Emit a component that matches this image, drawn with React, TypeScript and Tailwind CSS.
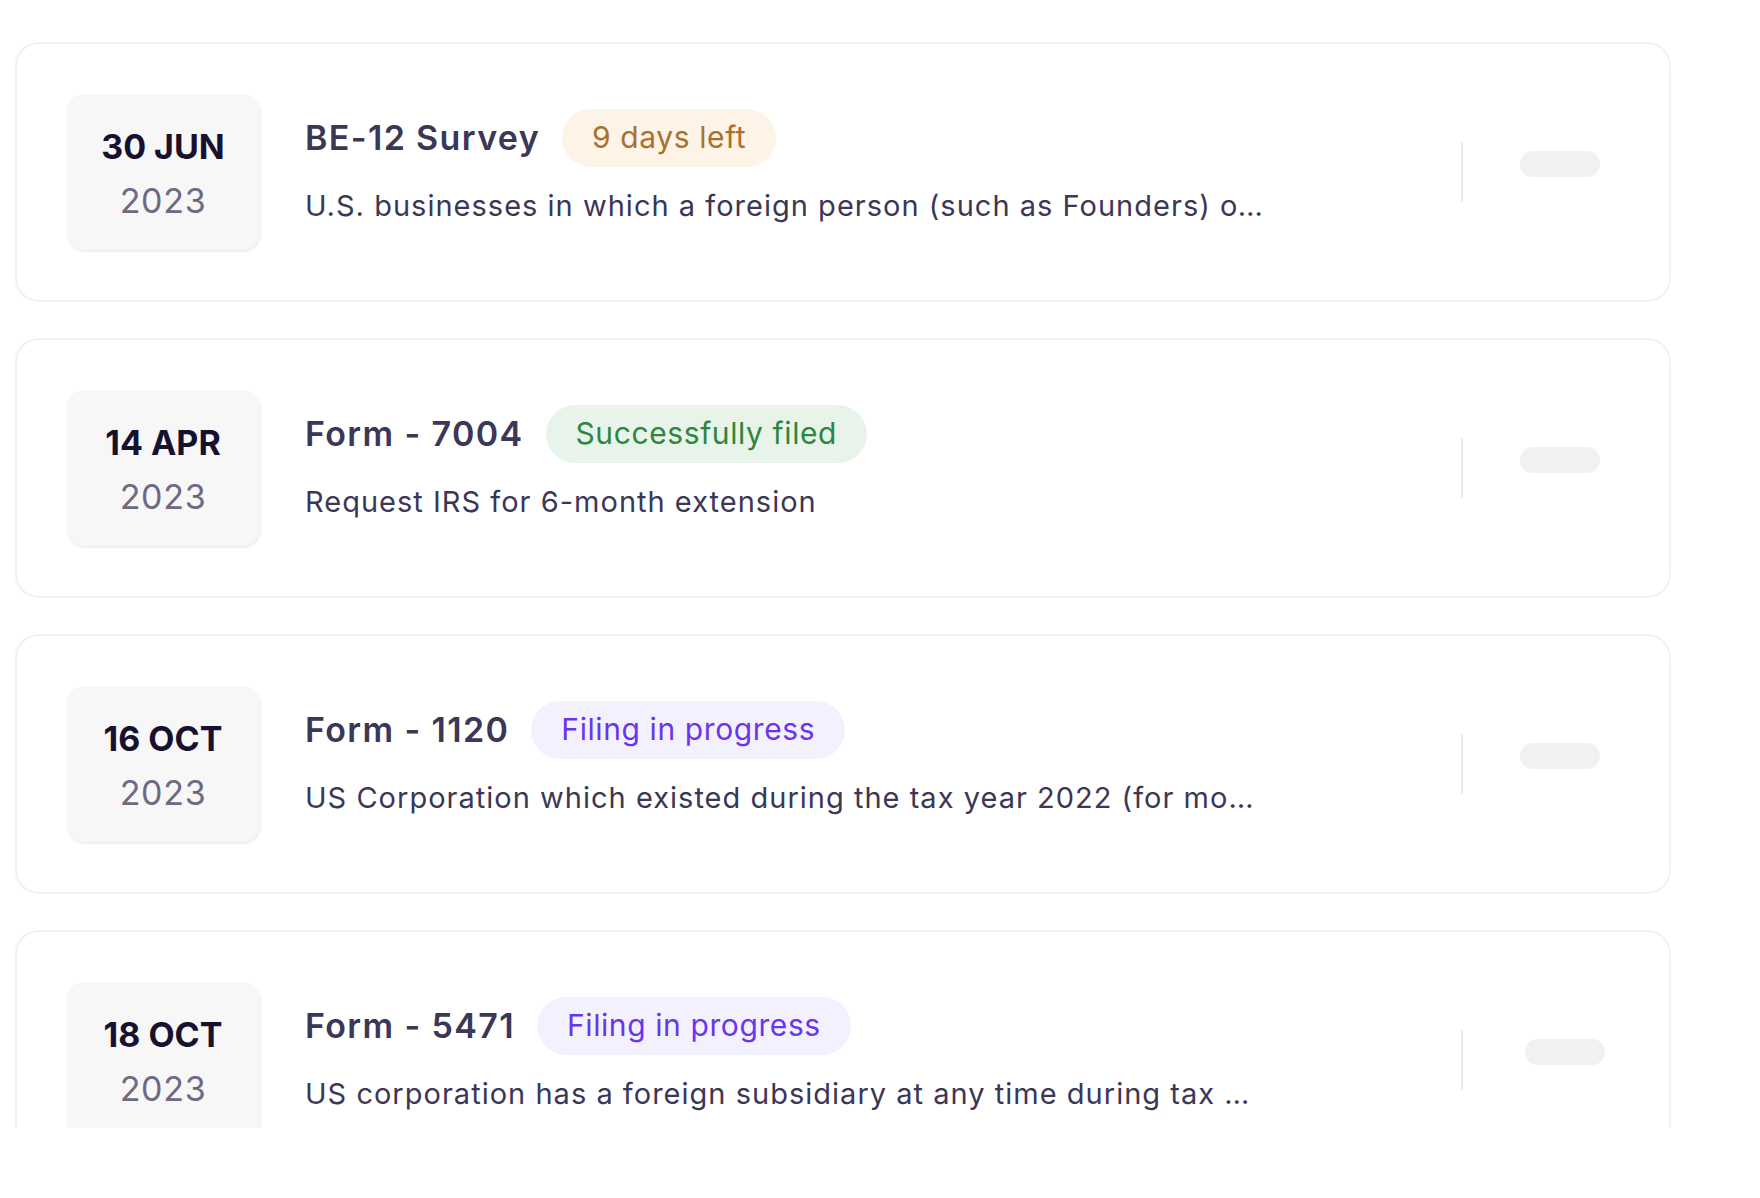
type Tone = 'orange' | 'green' | 'purple';

type Filing = {
  day: string;
  year: string;
  title: string;
  status: string;
  tone: Tone;
  description: string;
  pillShift?: boolean;
};

const filings: Filing[] = [
  {
    day: '30 JUN',
    year: '2023',
    title: 'BE-12 Survey',
    status: '9 days left',
    tone: 'orange',
    description:
      'U.S. businesses in which a foreign person (such as Founders) own 10% or more of the voting securities',
  },
  {
    day: '14 APR',
    year: '2023',
    title: 'Form - 7004',
    status: 'Successfully filed',
    tone: 'green',
    description: 'Request IRS for 6-month extension',
  },
  {
    day: '16 OCT',
    year: '2023',
    title: 'Form - 1120',
    status: 'Filing in progress',
    tone: 'purple',
    description:
      'US Corporation which existed during the tax year 2022 (for most of the companies this is a must)',
  },
  {
    day: '18 OCT',
    year: '2023',
    title: 'Form - 5471',
    status: 'Filing in progress',
    tone: 'purple',
    description:
      'US corporation has a foreign subsidiary at any time during tax year 2022 and owns more than 50%',
    pillShift: true,
  },
];

const toneClass: Record<Tone, string> = {
  orange: 'bg-[#fdf3e6] text-[#a8712f]',
  green: 'bg-[#e8f4ea] text-[#2e8540]',
  purple: 'bg-[#f4f1fe] text-[#6a35ee]',
};

function FilingCard({ item }: { item: Filing }) {
  return (
    <div className="flex h-[260px] shrink-0 items-center rounded-[24px] border-2 border-[#f1f1f3] bg-white pl-[49px] pr-[69px]">
      <div className="flex h-[156px] w-[194px] shrink-0 flex-col items-center justify-center rounded-[18px] bg-[#f7f7f8] pt-1 shadow-[1px_2px_2px_rgba(0,0,0,0.07)]">
        <span className="text-[34px] leading-[54px] font-bold text-[#16112e]">{item.day}</span>
        <span className="text-[34px] leading-[54px] tracking-[0.02em] text-[#6e6a82]">{item.year}</span>
      </div>

      <div className="-mt-[10px] ml-[45px] flex w-[958px] min-w-0 flex-col">
        <div className="flex items-center gap-[22px]">
          <h3 className="text-[34px] leading-[44px] font-semibold tracking-[0.04em] text-[#3b3756]">
            {item.title}
          </h3>
          <span
            className={`flex h-[58px] items-center rounded-full px-[30px] text-[30px] tracking-[0.02em] ${toneClass[item.tone]}`}
          >
            {item.status}
          </span>
        </div>
        <p className="mt-[19px] truncate text-[29px] leading-[40px] tracking-[0.035em] text-[#3b3756]">
          {item.description}
        </p>
      </div>

      <div className="flex-1" />
      <div className="h-[60px] w-[2px] shrink-0 bg-[#ebebee]" />
      <div
        className={`-mt-[16px] h-[26px] w-[80px] shrink-0 rounded-full bg-[#f1f1f3] ${
          item.pillShift ? 'mr-[-5px] ml-[62px]' : 'ml-[57px]'
        }`}
      />
    </div>
  );
}

export default function App() {
  return (
    <main
      className="min-h-screen bg-white"
      style={{ fontFamily: 'Inter, "Noto Sans", "Liberation Sans", sans-serif' }}
    >
      <div className="flex h-[1128px] w-[1671px] flex-col gap-[36px] overflow-hidden pt-[42px] pl-[15px]">
        {filings.map((item) => (
          <FilingCard key={item.title} item={item} />
        ))}
      </div>
    </main>
  );
}
